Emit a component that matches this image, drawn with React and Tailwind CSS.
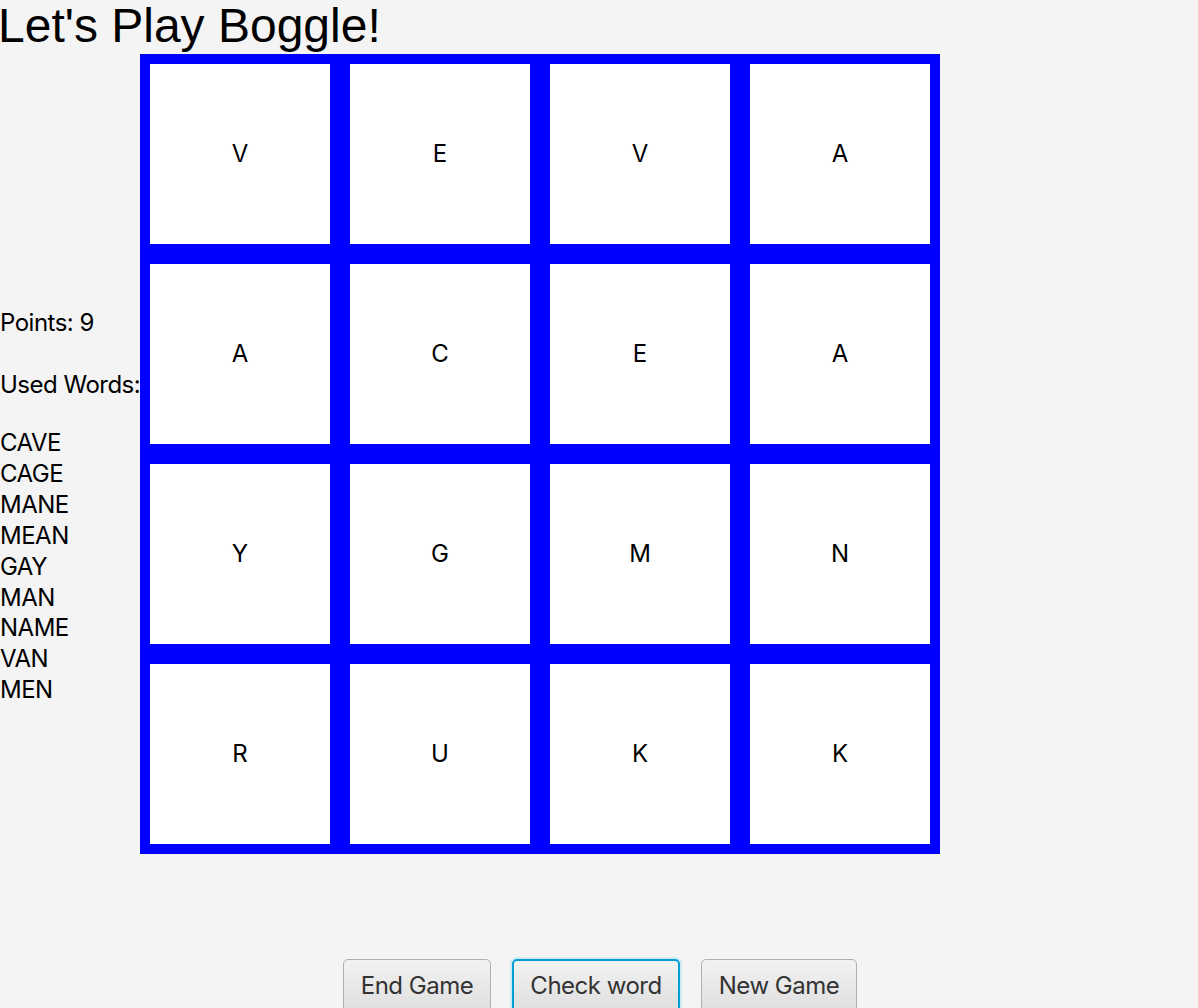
import React from "react";

const letters = [
  ["V", "E", "V", "A"],
  ["A", "C", "E", "A"],
  ["Y", "G", "M", "N"],
  ["R", "U", "K", "K"],
];

const words = ["CAVE", "CAGE", "MANE", "MEAN", "GAY", "MAN", "NAME", "VAN", "MEN"];

export default function App() {
  return (
    <div className="w-[1198px] h-[1008px] overflow-hidden bg-[#f4f4f4] flex flex-col">
      <div
        className="shrink-0 h-[54px] text-[48px] leading-[52px] text-black whitespace-nowrap -ml-[2px]"
        style={{ fontFamily: '"Liberation Sans", Arial, sans-serif' }}
      >
        Let's Play Boggle!
      </div>
      <div className="flex shrink-0">
        <div
          className="w-[140px] overflow-hidden pt-[253px] text-[24px] leading-[31px] text-black whitespace-nowrap tracking-[-0.5px]"
          style={{ fontFamily: 'Inter, "Noto Sans", sans-serif' }}
        >
          <div>Points: 9</div>
          <div className="h-[31px]" />
          <div>Used Words:</div>
          <div className="h-[28px]" />
          <div className="leading-[30.9px]">
            {words.map((w) => (
              <div key={w}>{w}</div>
            ))}
          </div>
        </div>
        <div className="w-[800px] h-[800px] bg-[#0000ff] p-[10px] grid grid-cols-4 gap-[20px]">
          {letters.flat().map((l, i) => (
            <div
              key={i}
              className="bg-white flex items-center justify-center text-[24px] text-black"
              style={{ fontFamily: 'Inter, "Noto Sans", sans-serif' }}
            >
              {l}
            </div>
          ))}
        </div>
      </div>
      <div
        className="shrink-0 flex justify-start gap-[21px] pl-[343px] mt-[105px]"
        style={{ fontFamily: 'Inter, "Noto Sans", sans-serif' }}
      >
        <button className="w-[148px] h-[56px] rounded-[5px] border border-[#b0b0b0] bg-gradient-to-b from-[#f2f2f2] to-[#dedede] text-[24px] text-[#333] pb-[2px] tracking-[-0.5px]">
          End Game
        </button>
        <button className="w-[168px] h-[56px] rounded-[5px] border-2 border-[#039ed3] shadow-[0_0_0_2px_#cfe9f5] bg-gradient-to-b from-[#f2f2f2] to-[#dedede] text-[24px] text-[#333] pb-[2px] tracking-[-0.5px]">
          Check word
        </button>
        <button className="w-[156px] h-[56px] rounded-[5px] border border-[#b0b0b0] bg-gradient-to-b from-[#f2f2f2] to-[#dedede] text-[24px] text-[#333] pb-[2px] tracking-[-0.5px]">
          New Game
        </button>
      </div>
    </div>
  );
}
